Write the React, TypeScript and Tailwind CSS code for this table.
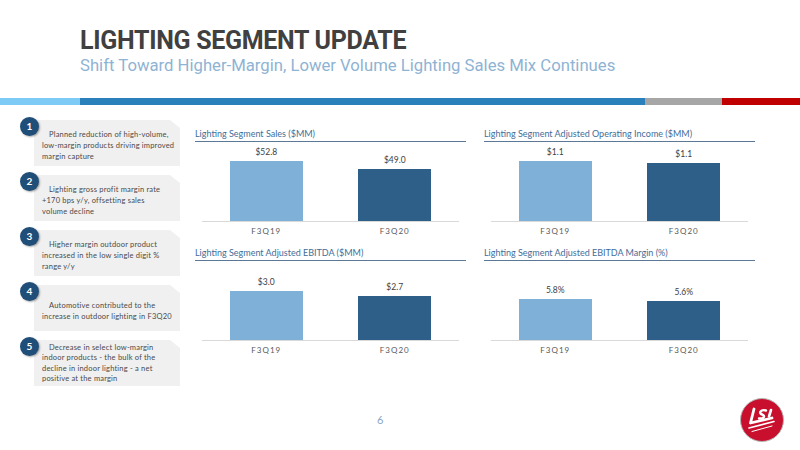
const bullets = [
  { n: 1, lines: ['Planned reduction of high-volume,', 'low-margin products driving improved', 'margin capture'] },
  { n: 2, lines: ['Lighting gross profit margin rate', '+170 bps y/y, offsetting sales', 'volume decline'] },
  { n: 3, lines: ['Higher margin outdoor product', 'increased in the low single digit %', 'range y/y'] },
  { n: 4, lines: ['Automotive contributed to the', 'increase in outdoor lighting in F3Q20'] },
  { n: 5, lines: ['Decrease in select low-margin', 'indoor products - the bulk of the', 'decline in indoor lighting - a net', 'positive at the margin'] },
]

interface ChartData {
  title: string
  values: { label: string; text: string; h: number }[]
}

const charts: ChartData[] = [
  {
    title: 'Lighting Segment Sales ($MM)',
    values: [
      { label: 'F3Q19', text: '$52.8', h: 60 },
      { label: 'F3Q20', text: '$49.0', h: 52 },
    ],
  },
  {
    title: 'Lighting Segment Adjusted Operating Income ($MM)',
    values: [
      { label: 'F3Q19', text: '$1.1', h: 60 },
      { label: 'F3Q20', text: '$1.1', h: 58 },
    ],
  },
  {
    title: 'Lighting Segment Adjusted EBITDA ($MM)',
    values: [
      { label: 'F3Q19', text: '$3.0', h: 49 },
      { label: 'F3Q20', text: '$2.7', h: 44 },
    ],
  },
  {
    title: 'Lighting Segment Adjusted EBITDA Margin (%)',
    values: [
      { label: 'F3Q19', text: '5.8%', h: 41 },
      { label: 'F3Q20', text: '5.6%', h: 39 },
    ],
  },
]

function Chart({ chart }: { chart: ChartData }) {
  return (
    <div className="flex flex-col">
      {/* Title with rule */}
      <div className="h-[14px] border-b border-[#5b7896] text-[9px] leading-[12px] text-[#3f6d99] whitespace-nowrap">
        {chart.title}
      </div>
      {/* Plot */}
      <div className="mx-[7px] flex h-[80px] border-b border-[#d9d9d9]">
        {chart.values.map((v, i) => (
          <div key={v.label} className="flex flex-1 flex-col items-center justify-end">
            <span className="mb-[3px] text-[8.5px] leading-[11px] text-[#404040]">{v.text}</span>
            <div
              className={i === 0 ? 'w-[73px] bg-[#7fb0d7]' : 'w-[73px] bg-[#2d5f89]'}
              style={{ height: v.h }}
            />
          </div>
        ))}
      </div>
      {/* Axis labels */}
      <div className="mx-[7px] flex h-[18px]">
        {chart.values.map((v) => (
          <div key={v.label} className="flex flex-1 items-center justify-center text-[8px] tracking-[1px] text-[#595959]">
            {v.label}
          </div>
        ))}
      </div>
    </div>
  )
}

function Logo() {
  return (
    <svg width="46" height="46" viewBox="0 0 46 46">
      <circle cx="23" cy="23" r="21.5" fill="#c8102e" stroke="#b5b5b5" strokeWidth="1" />
      <g stroke="#fff" strokeLinecap="round" strokeLinejoin="round" fill="none">
        <path d="M15 12 L11.5 26 L33 21" strokeWidth="2.8" />
        <path d="M27 13.5 C21.5 12 19.5 16.5 23 17.5 C26.5 18.5 25.5 22 20 21.5" strokeWidth="2.4" />
        <path d="M32 13 L30 19.5" strokeWidth="2.6" />
        <path d="M10 31 L35 24.5" strokeWidth="1.6" />
        <path d="M13 34.5 L33 29" strokeWidth="1" />
      </g>
    </svg>
  )
}

export default function App() {
  return (
    <div className="relative h-[450px] w-[800px] overflow-hidden bg-white font-['Lato',sans-serif]">
      {/* Header */}
      <div className="h-[98px] pl-[80px] pt-[26px]">
        <h1 className="font-['Roboto',sans-serif] text-[25px] leading-[30px] font-bold tracking-[-0.3px] text-[#404040]">
          LIGHTING SEGMENT UPDATE
        </h1>
        <p className="font-['Roboto',sans-serif] text-[16.7px] leading-[20px] text-[#8fb3d3]">
          Shift Toward Higher-Margin, Lower Volume Lighting Sales Mix Continues
        </p>
      </div>

      {/* Colour bar */}
      <div className="flex h-[7px]">
        <div className="w-[80px] bg-[#7ecaf6]" />
        <div className="w-[565px] bg-[#2a80bb]" />
        <div className="w-[77px] bg-[#a6a6a6]" />
        <div className="w-[78px] bg-[#c00000]" />
      </div>

      {/* Main */}
      <div className="flex h-[290px]">
        {/* Bullets */}
        <div className="flex w-[180px] flex-col gap-[6px] pl-[20px] pt-[12px]">
          {bullets.map((b) => (
            <div key={b.n} className="relative h-[49px] pl-[14px] pt-[3px]">
              <div
                className={
                  b.lines.length > 3
                    ? 'flex h-[46px] w-[146px] flex-col justify-center bg-[#f0f0f0] pl-[8px] pt-[1px] text-[7.5px] leading-[10.5px] tracking-[0.2px] whitespace-nowrap text-[#4a4a4a] [clip-path:polygon(0_0,136px_0,146px_8px,146px_100%,0_100%)]'
                    : 'flex h-[46px] w-[146px] flex-col justify-center bg-[#f0f0f0] pl-[8px] pt-[5px] text-[7.5px] leading-[11px] tracking-[0.2px] whitespace-nowrap text-[#4a4a4a] [clip-path:polygon(0_0,136px_0,146px_8px,146px_100%,0_100%)]'
                }
              >
                {b.lines.map((l, i) => (
                  <span key={l} className={i === 0 ? 'pl-[7px]' : ''}>
                    {l}
                  </span>
                ))}
              </div>
              <div className="absolute left-0 top-0 flex h-[19px] w-[19px] items-center justify-center rounded-full bg-[#1f4e79] text-[10px] font-bold text-white shadow-[1px_1px_2px_rgba(0,0,0,0.35)]">
                {b.n}
              </div>
            </div>
          ))}
        </div>

        {/* Charts */}
        <div className="ml-[15px] grid grid-cols-[271px_271px] gap-x-[18px] gap-y-[7px] pt-[23px] content-start">
          {charts.map((c) => (
            <Chart key={c.title} chart={c} />
          ))}
        </div>
      </div>

      {/* Footer */}
      <div className="flex h-[55px] items-start">
        <span className="ml-[377px] mt-[18px] text-[11px] leading-[14px] text-[#8aa6c6]">6</span>
        <div className="ml-auto mr-[15px] mt-[2px]">
          <Logo />
        </div>
      </div>
    </div>
  )
}
